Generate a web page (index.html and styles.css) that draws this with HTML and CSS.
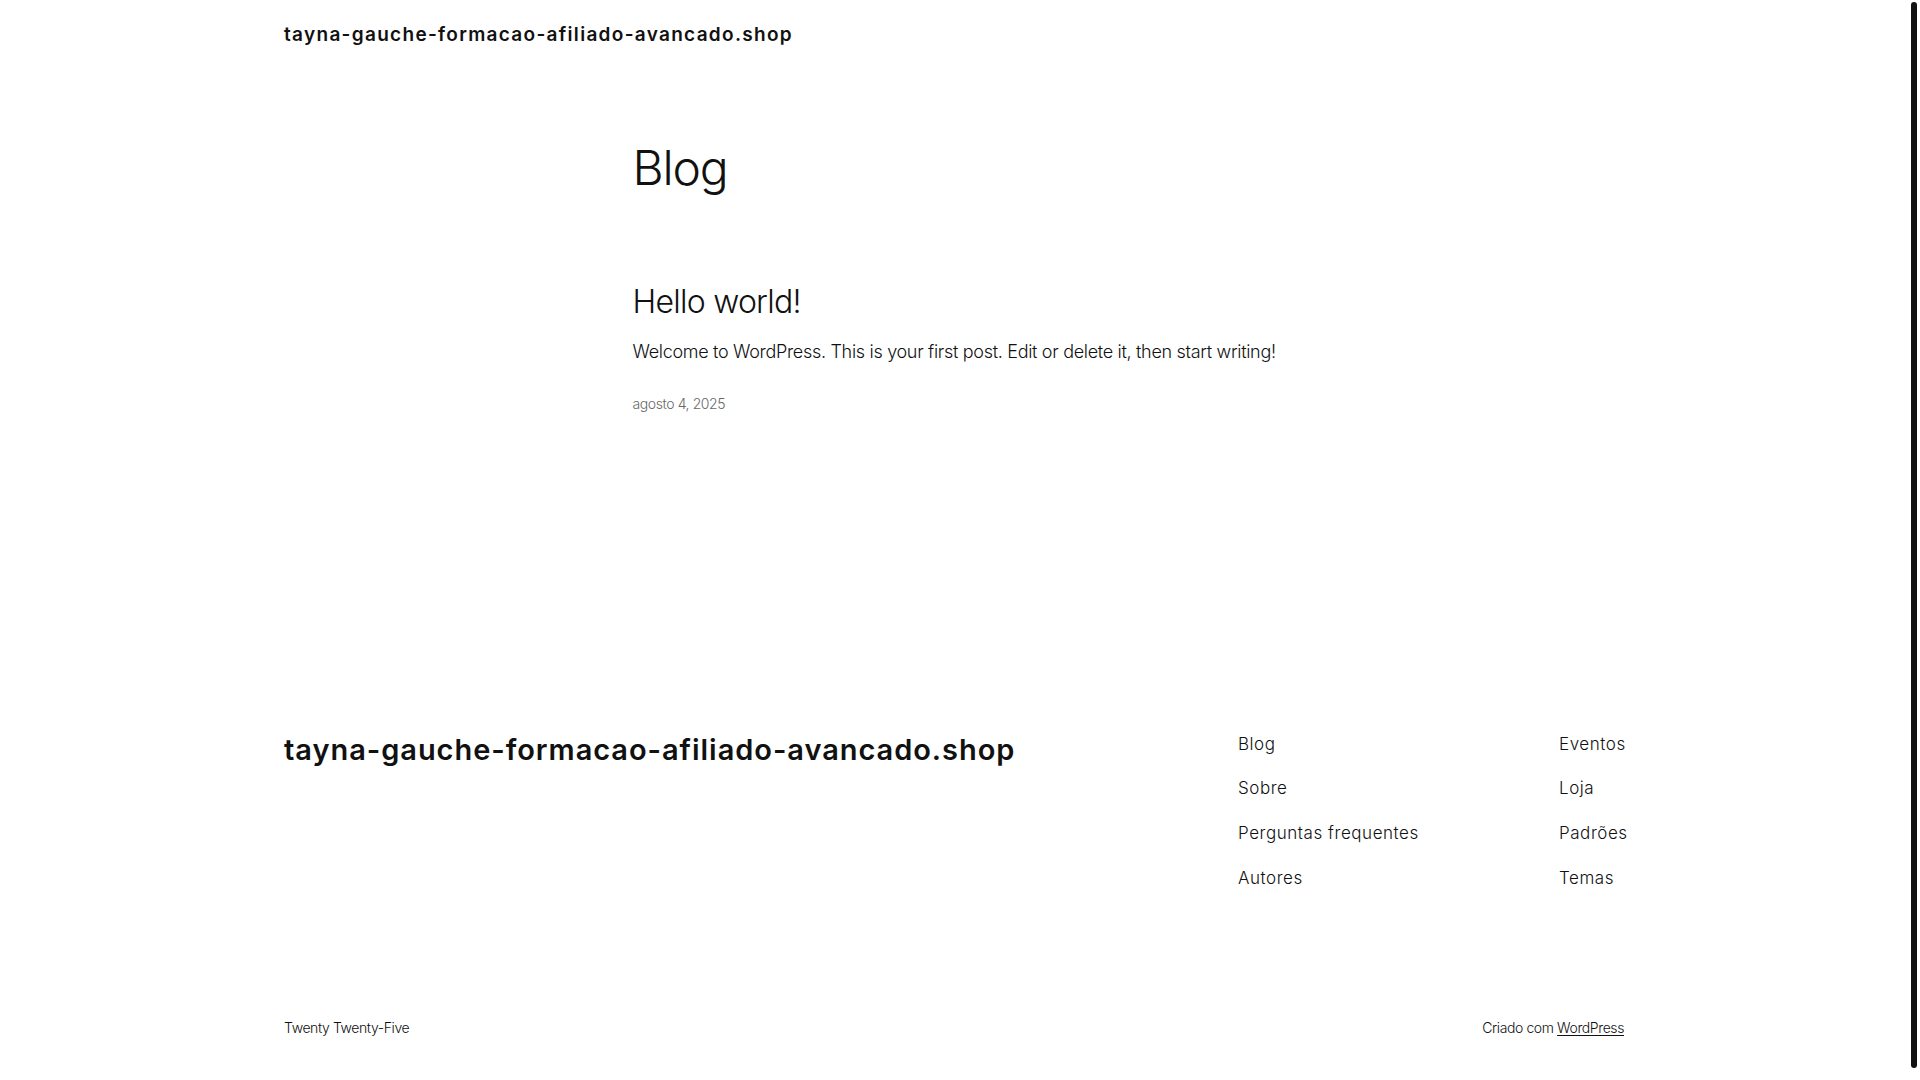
FILE: index.html
```html
<!DOCTYPE html>
<html lang="pt-BR">
<head>
<meta charset="utf-8">
<title>Blog – tayna-gauche-formacao-afiliado-avancado.shop</title>
<link rel="stylesheet" href="styles.css">
</head>
<body>
<div class="page">
  <header class="site-header">
    <a class="site-title" href="#">tayna-gauche-formacao-afiliado-avancado.shop</a>
  </header>

  <main class="content">
    <h1 class="page-title">Blog</h1>
    <article class="post">
      <h2 class="post-title"><a href="#">Hello world!</a></h2>
      <p class="post-content">Welcome to WordPress. This is your first post. Edit or delete it, then start writing!</p>
      <div class="post-date">agosto 4, 2025</div>
    </article>
  </main>

  <footer class="site-footer">
    <div class="footer-top">
      <h2 class="footer-title"><a href="#">tayna-gauche-formacao-afiliado-avancado.shop</a></h2>
      <nav class="footer-nav">
        <ul class="nav-col">
          <li><a href="#">Blog</a></li>
          <li><a href="#">Sobre</a></li>
          <li><a href="#">Perguntas frequentes</a></li>
          <li><a href="#">Autores</a></li>
        </ul>
        <ul class="nav-col">
          <li><a href="#">Eventos</a></li>
          <li><a href="#">Loja</a></li>
          <li><a href="#">Padrões</a></li>
          <li><a href="#">Temas</a></li>
        </ul>
      </nav>
    </div>
    <div class="footer-bottom">
      <span class="credit">Twenty Twenty-Five</span>
      <span class="credit">Criado com <a class="wp-link" href="#">WordPress</a></span>
    </div>
  </footer>
</div>
<div class="scrollbar"><div class="thumb"></div></div>
</body>
</html>
```

FILE: styles.css
```css
* { box-sizing: border-box; }

html, body {
  margin: 0;
  height: 100%;
}

body {
  display: flex;
  overflow: hidden;
  background: #ffffff;
  color: #111111;
  font-family: Inter, "Noto Sans", sans-serif;
  font-weight: 300;
}

a {
  color: inherit;
  text-decoration: none;
}

.page {
  flex: 1;
  min-width: 0;
  padding: 0 50px;
  display: flex;
  flex-direction: column;
}

.scrollbar {
  width: 12px;
  flex-shrink: 0;
  display: flex;
  justify-content: center;
  padding-top: 2px;
}

.thumb {
  width: 6px;
  height: 1066px;
  background: #111111;
  border-radius: 3px;
}

/* Header */
.site-header {
  width: 100%;
  max-width: 1340px;
  margin: 0 auto;
  height: 68px;
  padding-top: 2px;
  display: flex;
  align-items: center;
}

.site-title {
  font-size: 19px;
  line-height: 1.4;
  font-weight: 600;
  letter-spacing: 1.3px;
  white-space: nowrap;
}

/* Main */
.content {
  width: 645px;
  margin: 0 auto;
  padding: 71px 0 0 1px;
}

.page-title {
  margin: 0;
  font-size: 48px;
  line-height: 1.2;
  font-weight: 300;
  letter-spacing: -1.2px;
}

.post {
  margin-top: 86px;
}

.post-title {
  margin: 0;
  font-size: 32px;
  line-height: 1.2;
  font-weight: 300;
  letter-spacing: -0.75px;
}

.post-content {
  margin: 18px 0 0;
  font-size: 18px;
  line-height: 1.4;
  letter-spacing: -0.31px;
  white-space: nowrap;
}

.post-date {
  margin-top: 30px;
  font-size: 14px;
  line-height: 1.4;
  color: #686868;
  letter-spacing: -0.4px;
}

/* Footer */
.site-footer {
  width: 100%;
  max-width: 1340px;
  margin: 321px auto 0;
}

.footer-top {
  display: flex;
  justify-content: space-between;
  align-items: flex-start;
}

.footer-title {
  margin: 0;
  font-size: 29px;
  line-height: 1;
  font-weight: 600;
  letter-spacing: 0.95px;
  white-space: nowrap;
}

.footer-nav {
  display: grid;
  grid-template-columns: 321px 66px;
  margin-top: -2px;
}

.nav-col {
  list-style: none;
  margin: 0;
  padding: 0 0 0 1px;
  display: flex;
  flex-direction: column;
  gap: 20.8px;
  font-size: 17px;
  line-height: 1.4;
  letter-spacing: 0.55px;
  white-space: nowrap;
}

.footer-bottom {
  margin-top: 128px;
  display: flex;
  justify-content: space-between;
  font-size: 14px;
  line-height: 1.4;
  letter-spacing: -0.4px;
}

.wp-link {
  text-decoration: underline;
  text-underline-offset: 2px;
}
```
